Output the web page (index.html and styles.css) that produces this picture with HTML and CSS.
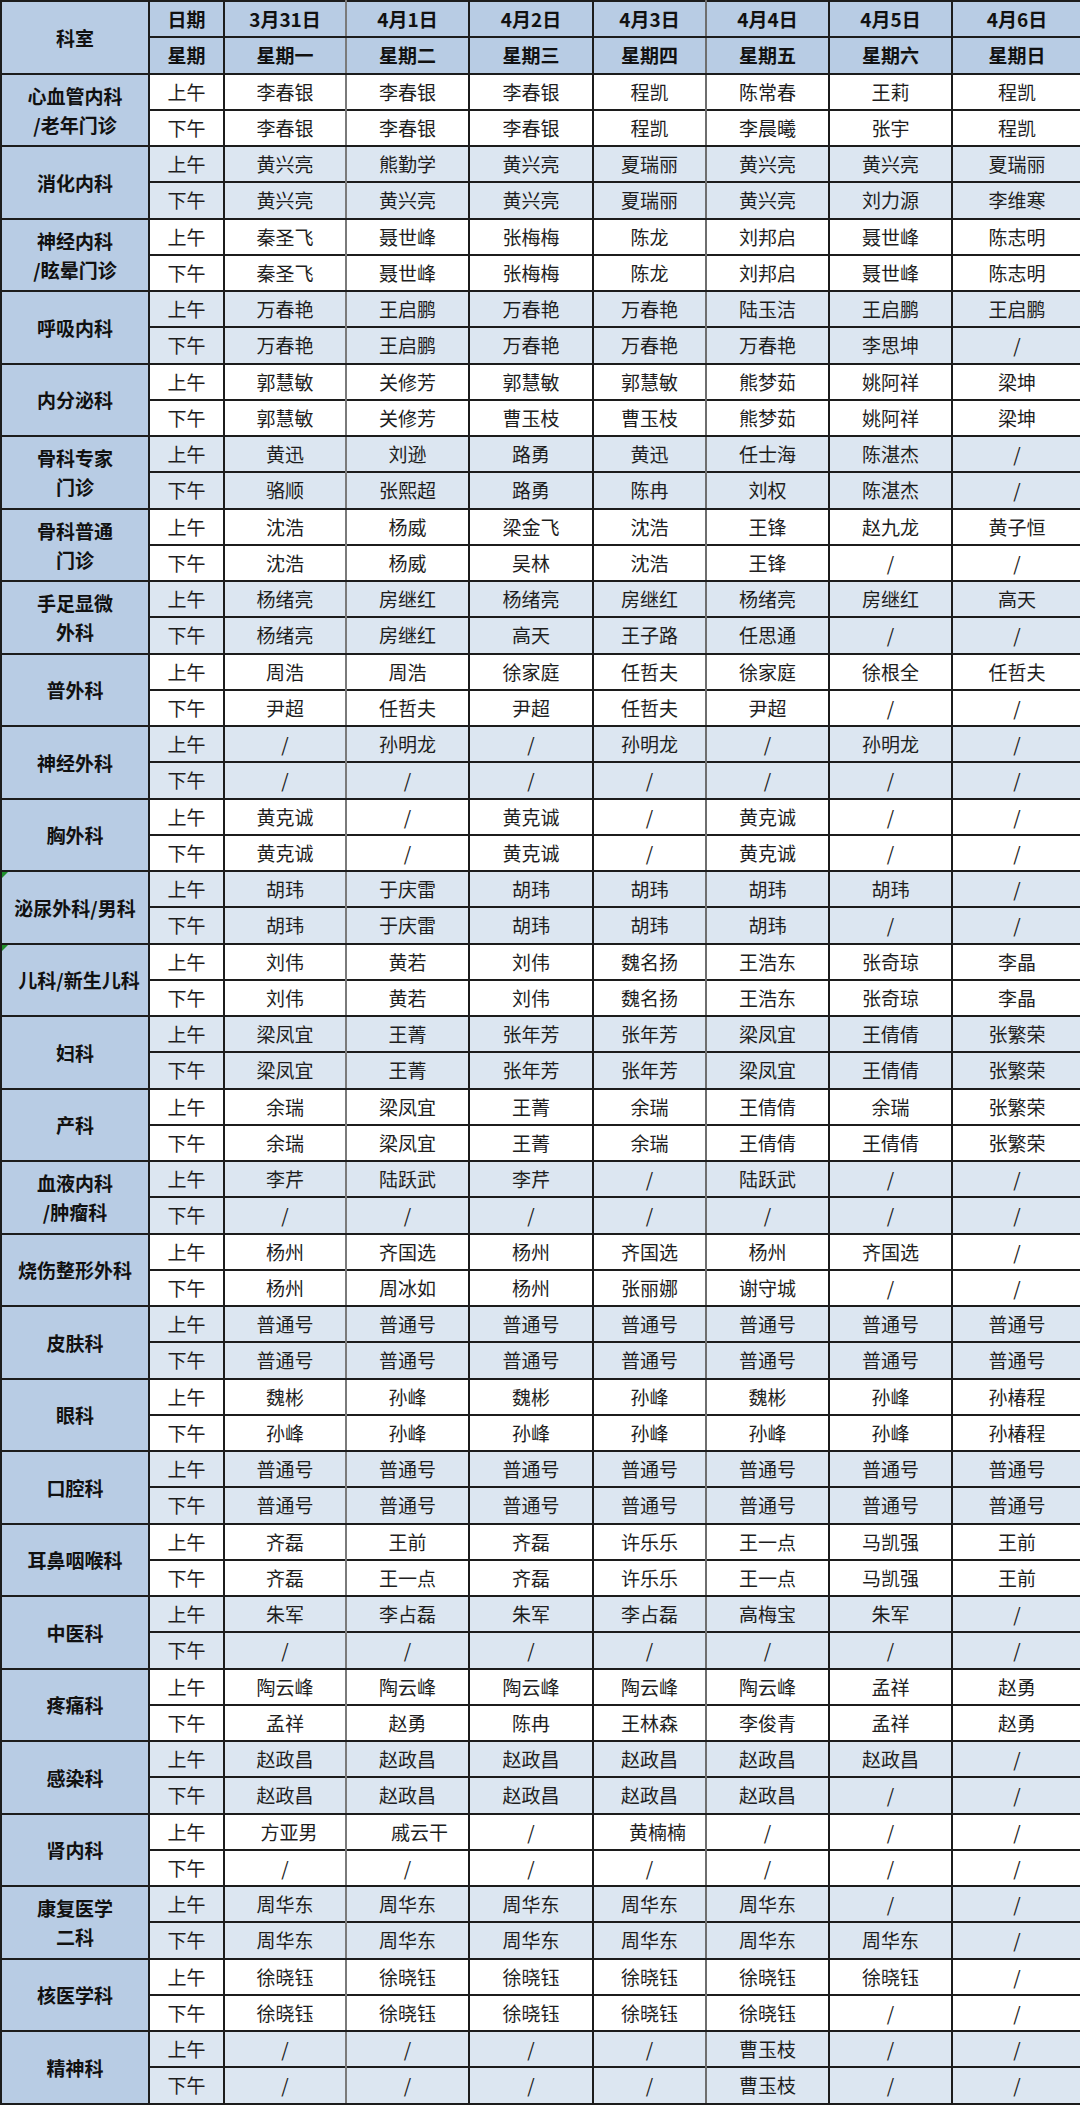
FILE: index.html
```html
<!DOCTYPE html>
<html lang="zh-CN">
<head>
<meta charset="utf-8">
<title>门诊排班表</title>
<link rel="stylesheet" href="styles.css">
</head>
<body>
<table class="schedule">
<colgroup>
<col class="c-dept"><col class="c-slot"><col class="c-d1"><col class="c-d2"><col class="c-d3"><col class="c-d4"><col class="c-d5"><col class="c-d6"><col class="c-d7">
</colgroup>
<thead>
<tr><th rowspan="2" class="dept">科室</th><th>日期</th><th>3月31日</th><th>4月1日</th><th>4月2日</th><th>4月3日</th><th>4月4日</th><th>4月5日</th><th>4月6日</th></tr>
<tr><th>星期</th><th>星期一</th><th>星期二</th><th>星期三</th><th>星期四</th><th>星期五</th><th>星期六</th><th>星期日</th></tr>
</thead>

<tbody class="w">
<tr><th rowspan="2" class="dept">心血管内科<br>/老年门诊</th><td>上午</td><td>李春银</td><td>李春银</td><td>李春银</td><td>程凯</td><td>陈常春</td><td>王莉</td><td>程凯</td></tr>
<tr><td>下午</td><td>李春银</td><td>李春银</td><td>李春银</td><td>程凯</td><td>李晨曦</td><td>张宇</td><td>程凯</td></tr>
</tbody>
<tbody class="b">
<tr><th rowspan="2" class="dept">消化内科</th><td>上午</td><td>黄兴亮</td><td>熊勤学</td><td>黄兴亮</td><td>夏瑞丽</td><td>黄兴亮</td><td>黄兴亮</td><td>夏瑞丽</td></tr>
<tr><td>下午</td><td>黄兴亮</td><td>黄兴亮</td><td>黄兴亮</td><td>夏瑞丽</td><td>黄兴亮</td><td>刘力源</td><td>李维寒</td></tr>
</tbody>
<tbody class="w">
<tr><th rowspan="2" class="dept">神经内科<br>/眩晕门诊</th><td>上午</td><td>秦圣飞</td><td>聂世峰</td><td>张梅梅</td><td>陈龙</td><td>刘邦启</td><td>聂世峰</td><td>陈志明</td></tr>
<tr><td>下午</td><td>秦圣飞</td><td>聂世峰</td><td>张梅梅</td><td>陈龙</td><td>刘邦启</td><td>聂世峰</td><td>陈志明</td></tr>
</tbody>
<tbody class="b">
<tr><th rowspan="2" class="dept">呼吸内科</th><td>上午</td><td>万春艳</td><td>王启鹏</td><td>万春艳</td><td>万春艳</td><td>陆玉洁</td><td>王启鹏</td><td>王启鹏</td></tr>
<tr><td>下午</td><td>万春艳</td><td>王启鹏</td><td>万春艳</td><td>万春艳</td><td>万春艳</td><td>李思坤</td><td>/</td></tr>
</tbody>
<tbody class="w">
<tr><th rowspan="2" class="dept">内分泌科</th><td>上午</td><td>郭慧敏</td><td>关修芳</td><td>郭慧敏</td><td>郭慧敏</td><td>熊梦茹</td><td>姚阿祥</td><td>梁坤</td></tr>
<tr><td>下午</td><td>郭慧敏</td><td>关修芳</td><td>曹玉枝</td><td>曹玉枝</td><td>熊梦茹</td><td>姚阿祥</td><td>梁坤</td></tr>
</tbody>
<tbody class="b">
<tr><th rowspan="2" class="dept">骨科专家<br>门诊</th><td>上午</td><td>黄迅</td><td>刘逊</td><td>路勇</td><td>黄迅</td><td>任士海</td><td>陈湛杰</td><td>/</td></tr>
<tr><td>下午</td><td>骆顺</td><td>张熙超</td><td>路勇</td><td>陈冉</td><td>刘权</td><td>陈湛杰</td><td>/</td></tr>
</tbody>
<tbody class="w">
<tr><th rowspan="2" class="dept">骨科普通<br>门诊</th><td>上午</td><td>沈浩</td><td>杨威</td><td>梁金飞</td><td>沈浩</td><td>王锋</td><td>赵九龙</td><td>黄子恒</td></tr>
<tr><td>下午</td><td>沈浩</td><td>杨威</td><td>吴林</td><td>沈浩</td><td>王锋</td><td>/</td><td>/</td></tr>
</tbody>
<tbody class="b">
<tr><th rowspan="2" class="dept">手足显微<br>外科</th><td>上午</td><td>杨绪亮</td><td>房继红</td><td>杨绪亮</td><td>房继红</td><td>杨绪亮</td><td>房继红</td><td>高天</td></tr>
<tr><td>下午</td><td>杨绪亮</td><td>房继红</td><td>高天</td><td>王子路</td><td>任思通</td><td>/</td><td>/</td></tr>
</tbody>
<tbody class="w">
<tr><th rowspan="2" class="dept">普外科</th><td>上午</td><td>周浩</td><td>周浩</td><td>徐家庭</td><td>任哲夫</td><td>徐家庭</td><td>徐根全</td><td>任哲夫</td></tr>
<tr><td>下午</td><td>尹超</td><td>任哲夫</td><td>尹超</td><td>任哲夫</td><td>尹超</td><td>/</td><td>/</td></tr>
</tbody>
<tbody class="b">
<tr><th rowspan="2" class="dept">神经外科</th><td>上午</td><td>/</td><td>孙明龙</td><td>/</td><td>孙明龙</td><td>/</td><td>孙明龙</td><td>/</td></tr>
<tr><td>下午</td><td>/</td><td>/</td><td>/</td><td>/</td><td>/</td><td>/</td><td>/</td></tr>
</tbody>
<tbody class="w">
<tr><th rowspan="2" class="dept">胸外科</th><td>上午</td><td>黄克诚</td><td>/</td><td>黄克诚</td><td>/</td><td>黄克诚</td><td>/</td><td>/</td></tr>
<tr><td>下午</td><td>黄克诚</td><td>/</td><td>黄克诚</td><td>/</td><td>黄克诚</td><td>/</td><td>/</td></tr>
</tbody>
<tbody class="b">
<tr><th rowspan="2" class="dept flag">泌尿外科/男科</th><td>上午</td><td>胡玮</td><td>于庆雷</td><td>胡玮</td><td>胡玮</td><td>胡玮</td><td>胡玮</td><td>/</td></tr>
<tr><td>下午</td><td>胡玮</td><td>于庆雷</td><td>胡玮</td><td>胡玮</td><td>胡玮</td><td>/</td><td>/</td></tr>
</tbody>
<tbody class="w">
<tr><th rowspan="2" class="dept flag shift">儿科/新生儿科</th><td>上午</td><td>刘伟</td><td>黄若</td><td>刘伟</td><td>魏名扬</td><td>王浩东</td><td>张奇琼</td><td>李晶</td></tr>
<tr><td>下午</td><td>刘伟</td><td>黄若</td><td>刘伟</td><td>魏名扬</td><td>王浩东</td><td>张奇琼</td><td>李晶</td></tr>
</tbody>
<tbody class="b">
<tr><th rowspan="2" class="dept">妇科</th><td>上午</td><td>梁凤宜</td><td>王菁</td><td>张年芳</td><td>张年芳</td><td>梁凤宜</td><td>王倩倩</td><td>张繁荣</td></tr>
<tr><td>下午</td><td>梁凤宜</td><td>王菁</td><td>张年芳</td><td>张年芳</td><td>梁凤宜</td><td>王倩倩</td><td>张繁荣</td></tr>
</tbody>
<tbody class="w">
<tr><th rowspan="2" class="dept">产科</th><td>上午</td><td>余瑞</td><td>梁凤宜</td><td>王菁</td><td>余瑞</td><td>王倩倩</td><td>余瑞</td><td>张繁荣</td></tr>
<tr><td>下午</td><td>余瑞</td><td>梁凤宜</td><td>王菁</td><td>余瑞</td><td>王倩倩</td><td>王倩倩</td><td>张繁荣</td></tr>
</tbody>
<tbody class="b">
<tr><th rowspan="2" class="dept">血液内科<br>/肿瘤科</th><td>上午</td><td>李芹</td><td>陆跃武</td><td>李芹</td><td>/</td><td>陆跃武</td><td>/</td><td>/</td></tr>
<tr><td>下午</td><td>/</td><td>/</td><td>/</td><td>/</td><td>/</td><td>/</td><td>/</td></tr>
</tbody>
<tbody class="w">
<tr><th rowspan="2" class="dept">烧伤整形外科</th><td>上午</td><td>杨州</td><td>齐国选</td><td>杨州</td><td>齐国选</td><td>杨州</td><td>齐国选</td><td>/</td></tr>
<tr><td>下午</td><td>杨州</td><td>周冰如</td><td>杨州</td><td>张丽娜</td><td>谢守城</td><td>/</td><td>/</td></tr>
</tbody>
<tbody class="b">
<tr><th rowspan="2" class="dept">皮肤科</th><td>上午</td><td>普通号</td><td>普通号</td><td>普通号</td><td>普通号</td><td>普通号</td><td>普通号</td><td>普通号</td></tr>
<tr><td>下午</td><td>普通号</td><td>普通号</td><td>普通号</td><td>普通号</td><td>普通号</td><td>普通号</td><td>普通号</td></tr>
</tbody>
<tbody class="w">
<tr><th rowspan="2" class="dept">眼科</th><td>上午</td><td>魏彬</td><td>孙峰</td><td>魏彬</td><td>孙峰</td><td>魏彬</td><td>孙峰</td><td>孙椿程</td></tr>
<tr><td>下午</td><td>孙峰</td><td>孙峰</td><td>孙峰</td><td>孙峰</td><td>孙峰</td><td>孙峰</td><td>孙椿程</td></tr>
</tbody>
<tbody class="b">
<tr><th rowspan="2" class="dept">口腔科</th><td>上午</td><td>普通号</td><td>普通号</td><td>普通号</td><td>普通号</td><td>普通号</td><td>普通号</td><td>普通号</td></tr>
<tr><td>下午</td><td>普通号</td><td>普通号</td><td>普通号</td><td>普通号</td><td>普通号</td><td>普通号</td><td>普通号</td></tr>
</tbody>
<tbody class="w">
<tr><th rowspan="2" class="dept">耳鼻咽喉科</th><td>上午</td><td>齐磊</td><td>王前</td><td>齐磊</td><td>许乐乐</td><td>王一点</td><td>马凯强</td><td>王前</td></tr>
<tr><td>下午</td><td>齐磊</td><td>王一点</td><td>齐磊</td><td>许乐乐</td><td>王一点</td><td>马凯强</td><td>王前</td></tr>
</tbody>
<tbody class="b">
<tr><th rowspan="2" class="dept">中医科</th><td>上午</td><td>朱军</td><td>李占磊</td><td>朱军</td><td>李占磊</td><td>高梅宝</td><td>朱军</td><td>/</td></tr>
<tr><td>下午</td><td>/</td><td>/</td><td>/</td><td>/</td><td>/</td><td>/</td><td>/</td></tr>
</tbody>
<tbody class="w">
<tr><th rowspan="2" class="dept">疼痛科</th><td>上午</td><td>陶云峰</td><td>陶云峰</td><td>陶云峰</td><td>陶云峰</td><td>陶云峰</td><td>孟祥</td><td>赵勇</td></tr>
<tr><td>下午</td><td>孟祥</td><td>赵勇</td><td>陈冉</td><td>王林森</td><td>李俊青</td><td>孟祥</td><td>赵勇</td></tr>
</tbody>
<tbody class="b">
<tr><th rowspan="2" class="dept">感染科</th><td>上午</td><td>赵政昌</td><td>赵政昌</td><td>赵政昌</td><td>赵政昌</td><td>赵政昌</td><td>赵政昌</td><td>/</td></tr>
<tr><td>下午</td><td>赵政昌</td><td>赵政昌</td><td>赵政昌</td><td>赵政昌</td><td>赵政昌</td><td>/</td><td>/</td></tr>
</tbody>
<tbody class="w">
<tr><th rowspan="2" class="dept">肾内科</th><td>上午</td><td class="nudge-s">方亚男</td><td class="nudge-l">戚云干</td><td>/</td><td class="nudge-m">黄楠楠</td><td>/</td><td>/</td><td>/</td></tr>
<tr><td>下午</td><td>/</td><td>/</td><td>/</td><td>/</td><td>/</td><td>/</td><td>/</td></tr>
</tbody>
<tbody class="b">
<tr><th rowspan="2" class="dept">康复医学<br>二科</th><td>上午</td><td>周华东</td><td>周华东</td><td>周华东</td><td>周华东</td><td>周华东</td><td>/</td><td>/</td></tr>
<tr><td>下午</td><td>周华东</td><td>周华东</td><td>周华东</td><td>周华东</td><td>周华东</td><td>周华东</td><td>/</td></tr>
</tbody>
<tbody class="w">
<tr><th rowspan="2" class="dept">核医学科</th><td>上午</td><td>徐晓钰</td><td>徐晓钰</td><td>徐晓钰</td><td>徐晓钰</td><td>徐晓钰</td><td>徐晓钰</td><td>/</td></tr>
<tr><td>下午</td><td>徐晓钰</td><td>徐晓钰</td><td>徐晓钰</td><td>徐晓钰</td><td>徐晓钰</td><td>/</td><td>/</td></tr>
</tbody>
<tbody class="b">
<tr><th rowspan="2" class="dept">精神科</th><td>上午</td><td>/</td><td>/</td><td>/</td><td>/</td><td>曹玉枝</td><td>/</td><td>/</td></tr>
<tr><td>下午</td><td>/</td><td>/</td><td>/</td><td>/</td><td>曹玉枝</td><td>/</td><td>/</td></tr>
</tbody>
</table>
</body>
</html>
```

FILE: styles.css
```css
html, body {
  margin: 0;
  padding: 0;
  background: #ffffff;
}

body {
  font-family: "Noto Sans CJK SC", "Microsoft YaHei", sans-serif;
  color: #1a1a1a;
  overflow: hidden;
}

.schedule {
  border-collapse: collapse;
  table-layout: fixed;
  width: 1080px;
}

.c-dept { width: 148px; }
.c-slot { width: 75px; }
.c-d1 { width: 122px; }
.c-d2 { width: 123px; }
.c-d3 { width: 124px; }
.c-d4 { width: 113px; }
.c-d5 { width: 123px; }
.c-d6 { width: 123px; }
.c-d7 { width: 129px; }

.schedule tr {
  height: 36.26px;
}

.schedule th,
.schedule td {
  padding: 0;
  text-align: center;
  vertical-align: middle;
  font-size: 19px;
  line-height: 24px;
  white-space: nowrap;
  border: 2px solid #1c1c1c;
}

.schedule thead th {
  background: #b8cce4;
  font-weight: 700;
  color: #111111;
}

.schedule th.dept {
  background: #b8cce4;
  font-weight: 700;
  color: #111111;
  line-height: 29px;
}

.schedule tbody.w td { background: #ffffff; }
.schedule tbody.b td { background: #dce6f1; }

.schedule td {
  font-weight: 400;
  color: #1e1e1e;
}

/* inner line between morning and afternoon rows */
.schedule tbody tr:first-child td {
  border-bottom: 1px solid #4a4a4a;
}

/* softer vertical grid lines */
.schedule thead tr:first-child th:nth-child(3),
.schedule thead tr:last-child th:nth-child(2),
.schedule tbody tr:first-child td:nth-child(3),
.schedule tbody tr:last-child td:nth-child(2) {
  border-right-color: #7a7a7a;
}

.schedule thead tr:first-child th:nth-child(6),
.schedule thead tr:last-child th:nth-child(5),
.schedule tbody tr:first-child td:nth-child(6),
.schedule tbody tr:last-child td:nth-child(5) {
  border-right-color: #6e6e6e;
}

.schedule tr > :last-child {
  border-right: none;
}

.flag {
  position: relative;
}

.flag::before {
  content: "";
  position: absolute;
  left: 0;
  top: 0;
  border-top: 6px solid #1f8f2a;
  border-right: 6px solid transparent;
}

.shift {
  padding-left: 8px !important;
}

.schedule td.nudge-s { padding-left: 8px; }
.schedule td.nudge-m { padding-left: 16px; }
.schedule td.nudge-l { padding-left: 24px; }
```
